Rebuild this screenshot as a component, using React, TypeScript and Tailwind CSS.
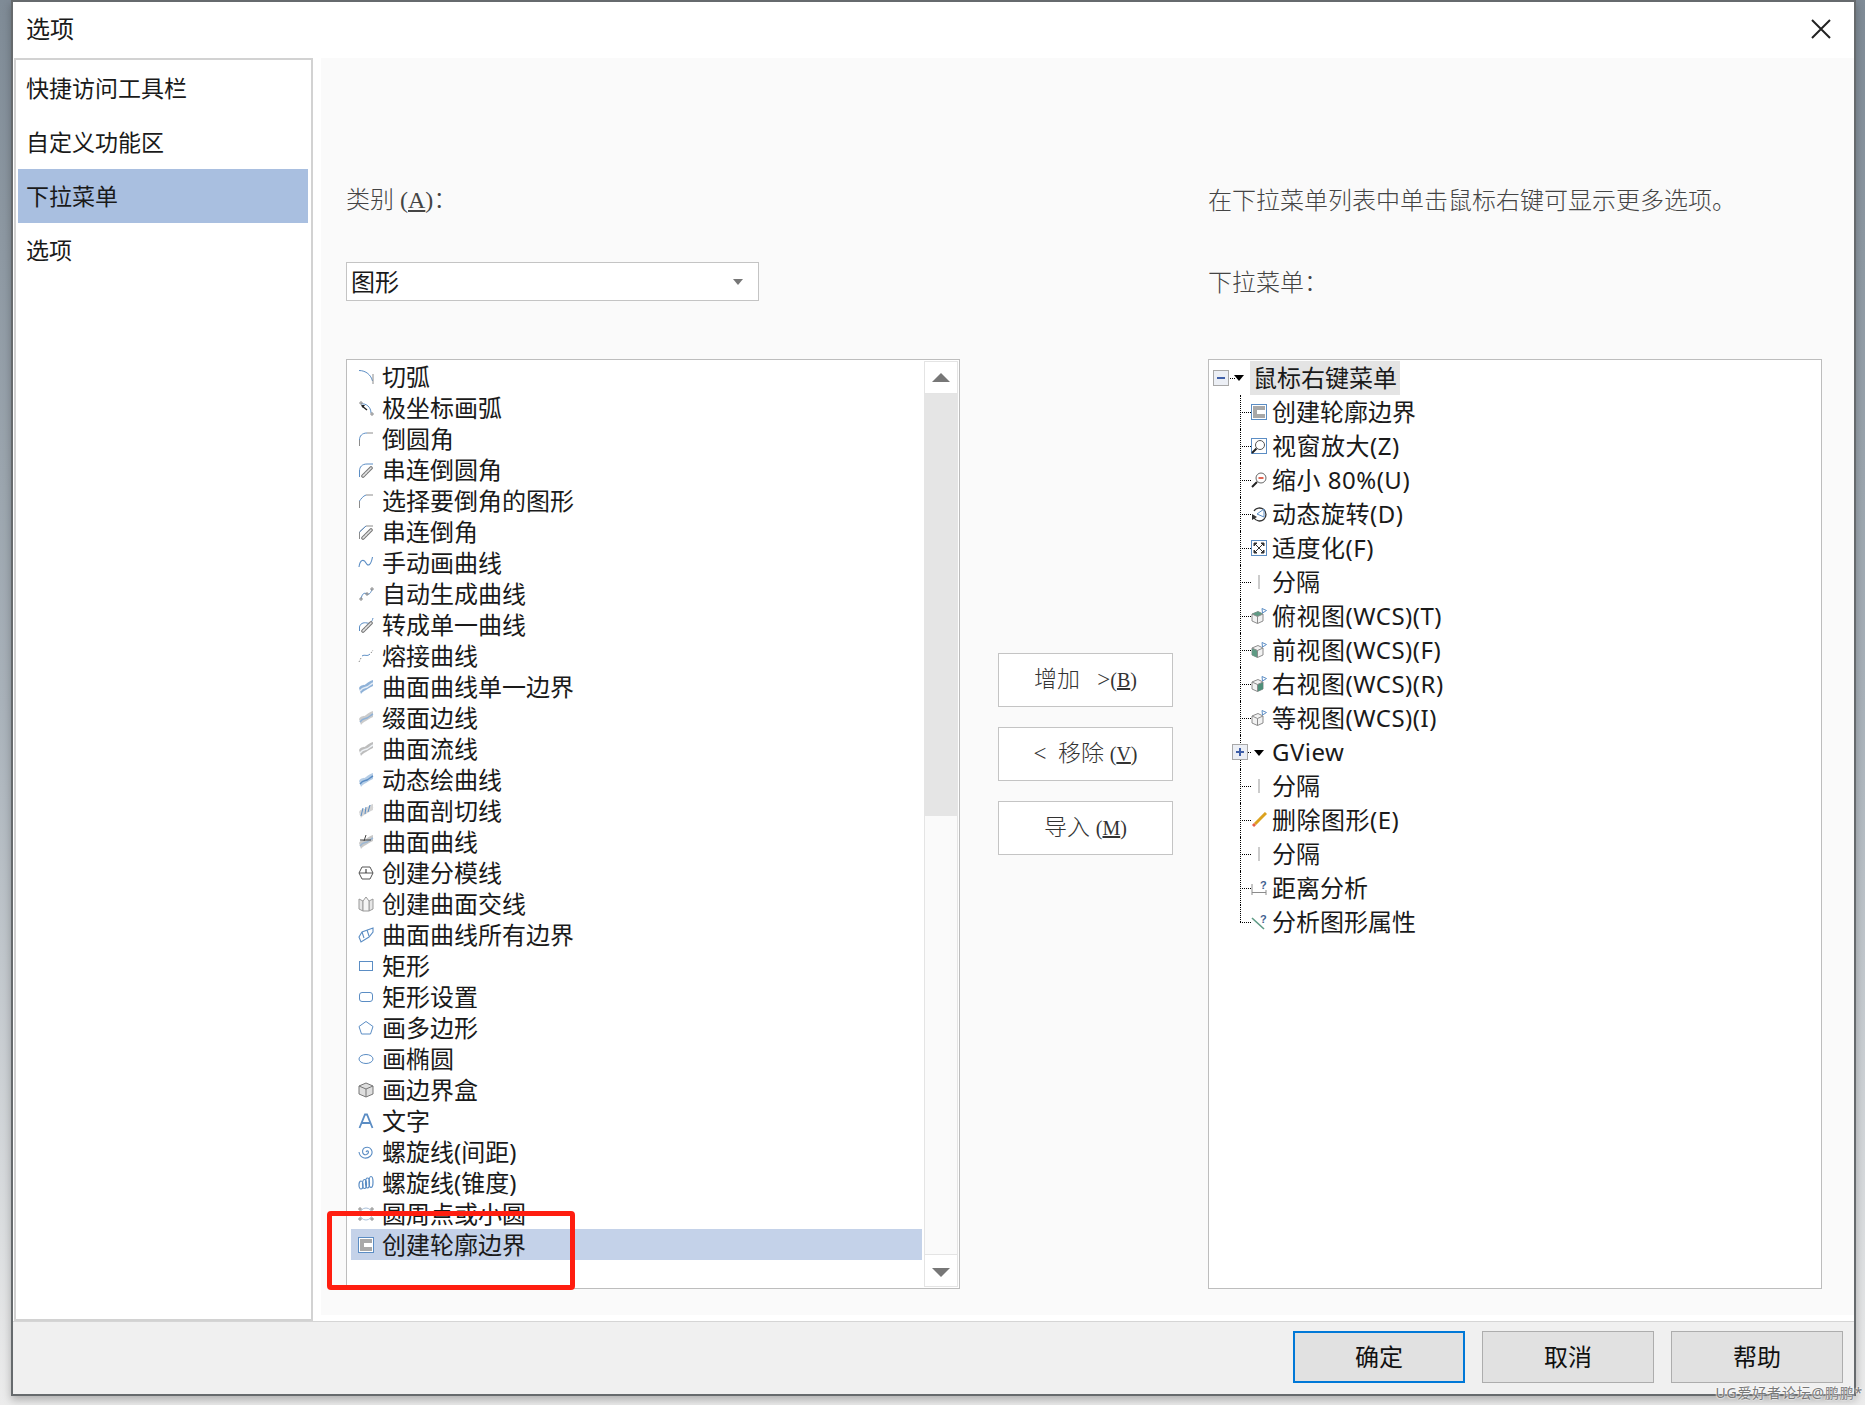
import type { ReactNode } from 'react'

const BLUE = '#5b8dc4'
const GRAY = '#8c8c8c'

function Chain() {
  return (
    <g fill="none" strokeLinecap="round">
      <path d="M5 14 L13 6" stroke="#777" strokeWidth="3.6" />
      <path d="M5 14 L13 6" stroke="#e4e4e4" strokeWidth="1.6" strokeDasharray="2 1.4" />
    </g>
  )
}

function Surface({ fill, line }: { fill: string; line: string }) {
  return (
    <g>
      <path d="M1 9 C3 5 6 7 8 5 C10 3 12 2 15 1 L15 7 C12 8 10 10 8 11 C6 12 4 13 3 15 Z" fill={fill} />
      <path d="M2 12 C5 8 7 9 9 8 C11 7 13 5 15 4" fill="none" stroke={line} strokeWidth="1.4" />
    </g>
  )
}

function Cross({ x, y }: { x: number; y: number }) {
  return <path d={`M${x - 2} ${y}h4M${x} ${y - 2}v4`} stroke={GRAY} strokeWidth="1" />
}

function Cube({ face }: { face?: 'top' | 'left' | 'right' }) {
  return (
    <g>
      <path d="M1 6 L7 3.5 L12 6 V13 L6.5 15.5 L1 13 Z" fill="#f2f2f2" stroke={GRAY} strokeWidth="1" />
      {face === 'top' && <path d="M1 6 L7 3.5 L12 6 L6.5 8.5 Z" fill="#5f9a84" />}
      {face === 'left' && <path d="M1 6 L6.5 8.5 V15.5 L1 13 Z" fill="#5f9a84" />}
      {face === 'right' && <path d="M6.5 8.5 L12 6 V13 L6.5 15.5 Z" fill="#4f8f79" />}
      <path d="M1 6 L6.5 8.5 L12 6 M6.5 8.5 V15.5" fill="none" stroke={GRAY} strokeWidth="1" />
      <path d="M11 0.5 L15.5 2.5 L11.5 5 Z" fill="#fff" stroke={BLUE} strokeWidth="1" />
    </g>
  )
}

function Separator() {
  return <path d="M8 1V15" stroke="#999" strokeWidth="1" />
}

function Outline() {
  return (
    <g>
      <rect x="0.5" y="0.5" width="15" height="15" fill="#fff" stroke={BLUE} />
      <path d="M2 2H14V6H6V10H14V14H2Z" fill="#a8a8a8" />
    </g>
  )
}

const icons: Record<string, ReactNode> = {
  tangentArc: (
    <g fill="none">
      <path d="M1 1.5 C8 1.5 13 6 14.5 12" stroke={BLUE} />
      <path d="M15 5V15" stroke={GRAY} />
    </g>
  ),
  polarArc: (
    <g fill="none">
      <path d="M3 4 C8 3 13 7 13 13" stroke={BLUE} />
      <Cross x={3} y={3} />
      <Cross x={14} y={14} />
      <path d="M4 6 L9 10" stroke="#222" strokeWidth="1.5" />
      <path d="M3 5 L7 5 L5 8Z" fill="#222" />
    </g>
  ),
  fillet: (
    <g fill="none">
      <path d="M1.5 15V9" stroke={GRAY} />
      <path d="M1.5 9 C1.5 5 4 2 9 2" stroke={BLUE} />
      <path d="M9 2H15" stroke={GRAY} />
    </g>
  ),
  chainFillet: (
    <g fill="none">
      <path d="M1.5 15V9 C1.5 5 4 2 9 2H15" stroke={BLUE} />
      <Chain />
    </g>
  ),
  chamfer: (
    <g fill="none">
      <path d="M1.5 15V8" stroke={GRAY} />
      <path d="M1.5 8 C3 6 5 3 8 2" stroke={BLUE} />
      <path d="M8 2H15" stroke={GRAY} />
    </g>
  ),
  chainChamfer: (
    <g fill="none">
      <path d="M1.5 15V8 L8 2H15" stroke={GRAY} />
      <path d="M1.5 8 L8 2" stroke={BLUE} />
      <Chain />
    </g>
  ),
  freehand: <path d="M1 12 C2 4 6 4 8 8 C10 12 13 10 14.5 2" fill="none" stroke={BLUE} strokeWidth="1.1" />,
  autoCurve: (
    <g fill="none">
      <path d="M3 13 C4 8 6 6 9 8 C11 9 13 7 14 3" stroke={BLUE} />
      <Cross x={3} y={13} />
      <Cross x={9} y={8} />
      <Cross x={14} y={3} />
    </g>
  ),
  singleCurve: (
    <g fill="none">
      <path d="M1.5 14 V10 C2 7 5 5 9 6 C12 7 14 5 15 1" stroke={BLUE} />
      <Chain />
    </g>
  ),
  blend: (
    <g fill="none">
      <path d="M4 8 C7 6 9 9 12 6" stroke={BLUE} />
      <path d="M1 14 L3 10 M13 5 L15 2" stroke={GRAY} strokeDasharray="1.5 1.5" />
    </g>
  ),
  surfEdge: <Surface fill="#8fb2d8" line="#e3ecf6" />,
  patchEdge: <Surface fill="#cbcbcb" line="#8fb2d8" />,
  flowLine: <Surface fill="#bdbdbd" line="#eef2f6" />,
  dynCurve: <Surface fill="#b5cde6" line="#5b8dc4" />,
  sliceCurve: (
    <g>
      <Surface fill="#d4d4d4" line="#d4d4d4" />
      <path d="M5 5 L3 13 M8 4 L7 11 M12 2 L10 9" stroke={BLUE} fill="none" />
    </g>
  ),
  surfCurve: (
    <g>
      <Surface fill="#c8c8c8" line="#9db8d4" />
      <path d="M2 6 H13 M8 1 L6 7" stroke="#444" fill="none" />
    </g>
  ),
  parting: (
    <g fill="none" stroke="#555">
      <path d="M1 8 L4 2 H12 L15 8 L12 14 H4 Z" />
      <path d="M1 8 H15" />
      <path d="M8 8V4" stroke="#222" />
    </g>
  ),
  intersect: (
    <g fill="#e6e6e6" stroke="#999">
      <path d="M1 3 L5 5 V15 L1 13 Z" />
      <path d="M15 3 L11 5 V15 L15 13 Z" />
      <path d="M5 5 L8 1 L11 5 V15 H5 Z" fill="#f4f4f4" />
    </g>
  ),
  allEdges: (
    <g fill="none" stroke={BLUE} strokeWidth="1.1">
      <path d="M1 10 L4 5 L15 1 V5 L11 10 L3 15 Z" />
      <path d="M4 5 L6 11 M9 3 L11 9" />
    </g>
  ),
  rect: <rect x="1.5" y="3.5" width="13" height="9" fill="none" stroke={BLUE} />,
  rectSet: <rect x="1.5" y="3.5" width="13" height="9" rx="2.5" fill="none" stroke={BLUE} />,
  polygon: <path d="M8 1.5 L15 6.5 L12.5 14 H3.5 L1 6.5 Z" fill="none" stroke={BLUE} />,
  ellipse: <ellipse cx="8" cy="8" rx="7" ry="4.5" fill="none" stroke={BLUE} />,
  box: (
    <g fill="#dedede" stroke="#777">
      <path d="M8 1 L15 4 V12 L8 15 L1 12 V4 Z" />
      <path d="M1 4 L8 7 L15 4 M8 7 V15" fill="none" />
    </g>
  ),
  text: <path d="M1.5 15 L7 1.5 H9 L14.5 15 M4 10 H12" fill="none" stroke={BLUE} strokeWidth="1.8" />,
  spiral: (
    <path
      d="M8 8 C10 5 12 9 8.5 10.5 C4 12 3 5 7.5 3.5 C13 2 16 8 12.5 12 C8 16 2 14 1 8"
      fill="none"
      stroke={BLUE}
      strokeWidth="1.1"
    />
  ),
  taperSpiral: (
    <g fill="none" stroke={BLUE} strokeWidth="1.2">
      <ellipse cx="3" cy="10" rx="2" ry="4" />
      <ellipse cx="6.5" cy="9" rx="2" ry="4.5" />
      <ellipse cx="9.5" cy="8" rx="2" ry="5" />
      <ellipse cx="13" cy="7" rx="2" ry="5.5" />
    </g>
  ),
  circlePoints: (
    <g fill="none">
      <circle cx="8" cy="8" r="6" stroke="#a9c0da" />
      <Cross x={2} y={3} />
      <Cross x={14} y={3} />
      <Cross x={2} y={13} />
      <Cross x={14} y={13} />
    </g>
  ),
  outline: <Outline />,
  zoomWin: (
    <g fill="none">
      <rect x="0.5" y="0.5" width="15" height="15" stroke={BLUE} />
      <circle cx="9" cy="7" r="4.5" stroke="#555" />
      <path d="M5.5 10.5 L1 15" stroke="#222" strokeWidth="2" />
    </g>
  ),
  zoomOut: (
    <g fill="none">
      <circle cx="10" cy="6" r="5" stroke="#666" />
      <path d="M7.5 6H12.5" stroke="#d9402b" strokeWidth="1.6" />
      <path d="M6 10 L1 15" stroke="#222" strokeWidth="2" />
    </g>
  ),
  rotate: (
    <g fill="none">
      <path d="M3 5 A6.5 6.5 0 1 1 3 12" stroke="#333" strokeWidth="1.3" />
      <path d="M1 8 L6 11 L1 14Z" fill="#333" />
      <path d="M13 3 L6 8 L13 11 Z" stroke={BLUE} />
    </g>
  ),
  fit: (
    <g fill="none">
      <rect x="0.5" y="0.5" width="15" height="15" stroke={BLUE} />
      <path d="M3 3 L13 13 M13 3 L3 13" stroke="#333" />
      <path d="M3 3h3L3 6Z M13 3h-3L13 6Z M3 13h3L3 10Z M13 13h-3L13 10Z" fill="#333" stroke="#333" />
    </g>
  ),
  sep: <Separator />,
  top: <Cube face="top" />,
  front: <Cube face="left" />,
  right: <Cube face="right" />,
  iso: <Cube />,
  erase: (
    <g>
      <path d="M15 1 L4 12" stroke="#dca21e" strokeWidth="3" />
      <path d="M4 12 L2 14" stroke="#e8604a" strokeWidth="3" />
    </g>
  ),
  distance: (
    <g fill="none">
      <path d="M1 4V15 M15 10V15 M1 12.5H15" stroke={GRAY} />
      <text x="9" y="8.5" fontSize="11" fontWeight="700" fill="#3f5f90" fontFamily="Liberation Sans, sans-serif">
        ?
      </text>
    </g>
  ),
  analyze: (
    <g fill="none">
      <path d="M1 4 L13 15" stroke="#5d9a85" strokeWidth="1.6" />
      <text x="9" y="8.5" fontSize="11" fontWeight="700" fill="#3f5f90" fontFamily="Liberation Sans, sans-serif">
        ?
      </text>
    </g>
  ),
}

function Icon({ name }: { name: string }) {
  return (
    <svg width="16" height="16" viewBox="0 0 16 16" className="shrink-0">
      {icons[name]}
    </svg>
  )
}

const sideItems = ['快捷访问工具栏', '自定义功能区', '下拉菜单', '选项']

const leftItems: [string, string][] = [
  ['tangentArc', '切弧'],
  ['polarArc', '极坐标画弧'],
  ['fillet', '倒圆角'],
  ['chainFillet', '串连倒圆角'],
  ['chamfer', '选择要倒角的图形'],
  ['chainChamfer', '串连倒角'],
  ['freehand', '手动画曲线'],
  ['autoCurve', '自动生成曲线'],
  ['singleCurve', '转成单一曲线'],
  ['blend', '熔接曲线'],
  ['surfEdge', '曲面曲线单一边界'],
  ['patchEdge', '缀面边线'],
  ['flowLine', '曲面流线'],
  ['dynCurve', '动态绘曲线'],
  ['sliceCurve', '曲面剖切线'],
  ['surfCurve', '曲面曲线'],
  ['parting', '创建分模线'],
  ['intersect', '创建曲面交线'],
  ['allEdges', '曲面曲线所有边界'],
  ['rect', '矩形'],
  ['rectSet', '矩形设置'],
  ['polygon', '画多边形'],
  ['ellipse', '画椭圆'],
  ['box', '画边界盒'],
  ['text', '文字'],
  ['spiral', '螺旋线(间距)'],
  ['taperSpiral', '螺旋线(锥度)'],
  ['circlePoints', '圆周点或小圆'],
  ['outline', '创建轮廓边界'],
]

const treeItems: [string, string][] = [
  ['outline', '创建轮廓边界'],
  ['zoomWin', '视窗放大(Z)'],
  ['zoomOut', '缩小 80%(U)'],
  ['rotate', '动态旋转(D)'],
  ['fit', '适度化(F)'],
  ['sep', '分隔'],
  ['top', '俯视图(WCS)(T)'],
  ['front', '前视图(WCS)(F)'],
  ['right', '右视图(WCS)(R)'],
  ['iso', '等视图(WCS)(I)'],
  ['gview', 'GView'],
  ['sep', '分隔'],
  ['erase', '删除图形(E)'],
  ['sep', '分隔'],
  ['distance', '距离分析'],
  ['analyze', '分析图形属性'],
]

function Caret({ className }: { className: string }) {
  return (
    <svg width="10" height="6" viewBox="0 0 10 6" className={className}>
      <path d="M0 0H10L5 6Z" fill="currentColor" />
    </svg>
  )
}

function Expander({ open, className }: { open: boolean; className: string }) {
  return (
    <span className={`flex h-[16px] w-[16px] items-center justify-center border border-[#a8a8a8] bg-[#eceff5] ${className}`}>
      <svg width="10" height="10" viewBox="0 0 10 10">
        <path d={open ? 'M1 5H9' : 'M1 5H9M5 1V9'} stroke="#3f5fa8" strokeWidth="2" />
      </svg>
    </span>
  )
}

function TreeRow({ icon, label, last }: { icon: string; label: string; last: boolean }) {
  const isGroup = icon === 'gview'
  const hasLatin = /[A-Za-z]/.test(label)
  return (
    <div className="relative flex h-[34px] items-center">
      <span
        className={`absolute left-[31px] top-0 border-l border-dotted border-black ${last ? 'h-[17px]' : 'h-[34px]'}`}
      />
      <span className="absolute left-[31px] top-[17px] w-[11px] border-t border-dotted border-black" />
      {isGroup ? (
        <>
          <Expander open={false} className="absolute left-[23px] top-[9px]" />
          <Caret className="absolute left-[45px] top-[15px] text-black" />
        </>
      ) : (
        <span className="absolute left-[42px] top-[9px]">
          <Icon name={icon} />
        </span>
      )}
      <span className={`pl-[63px] ${hasLatin ? 'tracking-[0.5px]' : ''}`}>{label}</span>
    </div>
  )
}

function DialogButton({ children, primary }: { children: ReactNode; primary?: boolean }) {
  return (
    <button
      className={`h-[52px] w-[172px] bg-[#e1e1e1] text-[24px] text-[#111] ${
        primary ? 'border-2 border-[#0078d7]' : 'border border-[#adadad]'
      }`}
    >
      {children}
    </button>
  )
}

function SideButton({ children }: { children: ReactNode }) {
  return (
    <button className="flex h-[54px] w-[175px] items-center justify-center border border-[#c4c4c4] bg-white text-[23px] font-light text-[#333]">
      {children}
    </button>
  )
}

function Mnemonic({ letter }: { letter: string }) {
  return (
    <span className="text-[20px]">
      (<span className="underline">{letter}</span>)
    </span>
  )
}

export default function App() {
  return (
    <div className="relative h-[1405px] w-[1865px] overflow-hidden bg-linear-to-b from-[#7f8b96] via-[#a9b2ba] to-[#ececec] pl-[11px] pr-[9px] [font-family:'Noto_Sans','Noto_Sans_CJK_SC',sans-serif]">
      <div className="flex h-[1396px] flex-col border-2 border-[#666a6d] bg-white text-[#1a1a1a] shadow-[0_4px_8px_rgba(0,0,0,0.25)]">
        <div className="flex h-[56px] shrink-0 items-center justify-between pb-[2px] pl-[13px] pr-[23px]">
          <span className="text-[24px]">选项</span>
          <svg width="20" height="20" viewBox="0 0 20 20">
            <path d="M1 1L19 19M19 1L1 19" stroke="#222" strokeWidth="2" />
          </svg>
        </div>

        <div className="flex h-[1263px] shrink-0">
          <div className="ml-px flex h-full w-[299px] shrink-0 flex-col border-2 border-[#d2d2d2] pl-[2px] pr-[3px] pt-px text-[23px]">
            {sideItems.map((item, i) => (
              <div
                key={item}
                className={`flex h-[54px] items-center pl-[8px] ${i === 2 ? 'bg-[#a9bfe0]' : ''}`}
              >
                {item}
              </div>
            ))}
          </div>

          <div className="ml-[8px] h-[1257px] flex-1 bg-[#fafafa] pl-[25px] pt-[124px] text-[24px] text-[#444]">
            <div className="grid h-[28px] grid-cols-[614px_248px_614px] items-center font-light">
              <span className="[font-family:'Liberation_Serif','Noto_Sans_CJK_SC',serif]">
                类别 (<span className="underline">A</span>)：
              </span>
              <span />
              <span className="whitespace-nowrap">在下拉菜单列表中单击鼠标右键可显示更多选项。</span>
            </div>

            <div className="mt-[52px] grid h-[39px] grid-cols-[614px_248px_614px] items-center">
              <div className="flex h-[39px] w-[413px] items-center justify-between border border-[#c4c4c4] bg-white pl-[4px] pr-[15px] text-[#1a1a1a]">
                图形
                <Caret className="text-[#777]" />
              </div>
              <span />
              <span className="pt-[2px] font-light [font-family:'Liberation_Serif','Noto_Sans_CJK_SC',serif]">
                下拉菜单：
              </span>
            </div>

            <div className="mt-[58px] grid h-[930px] grid-cols-[614px_248px_614px] text-[#1a1a1a]">
              <div className="relative flex border border-[#bdbdbd] bg-white">
                <div className="flex-1 pl-[4px] pt-px">
                  {leftItems.map(([icon, label], i) => (
                    <div
                      key={label}
                      className={`flex h-[31px] w-[571px] items-center gap-[8px] pl-[7px] leading-none ${
                        i === leftItems.length - 1 ? 'bg-[#c4d2e9]' : ''
                      }`}
                    >
                      <Icon name={icon} />
                      {label}
                    </div>
                  ))}
                </div>

                <div className="my-px mr-px flex w-[34px] flex-col bg-[#fafafa]">
                  <div className="flex h-[33px] shrink-0 items-center justify-center border border-[#e4e4e4] bg-white">
                    <svg width="18" height="9" viewBox="0 0 18 9">
                      <path d="M0 9L9 0L18 9Z" fill="#777" />
                    </svg>
                  </div>
                  <div className="h-[422px] shrink-0 bg-[#e5e5e5]" />
                  <div className="flex-1 border-x border-[#e4e4e4]" />
                  <div className="flex h-[33px] shrink-0 items-center justify-center border border-[#e4e4e4] bg-white pt-[3px]">
                    <svg width="18" height="9" viewBox="0 0 18 9">
                      <path d="M0 0L9 9L18 0Z" fill="#777" />
                    </svg>
                  </div>
                </div>

                <div className="absolute left-[-20px] top-[851px] h-[79px] w-[248px] rounded-[4px] border-[5px] border-[#ff1e10]" />
              </div>

              <div className="flex flex-col gap-[20px] pl-[38px] pt-[294px] [font-family:'Liberation_Serif','Noto_Sans_CJK_SC',serif]">
                <SideButton>
                  增加&nbsp;&nbsp;&nbsp;&gt;
                  <Mnemonic letter="B" />
                </SideButton>
                <SideButton>
                  &lt;&nbsp;&nbsp;移除&nbsp;
                  <Mnemonic letter="V" />
                </SideButton>
                <SideButton>
                  导入&nbsp;
                  <Mnemonic letter="M" />
                </SideButton>
              </div>

              <div className="border border-[#bdbdbd] bg-white pt-px leading-none">
                <div className="relative flex h-[34px] items-center">
                  <Expander open className="absolute left-[4px] top-[9px]" />
                  <span className="absolute left-[21px] top-[17px] w-[5px] border-t border-dotted border-black" />
                  <Caret className="absolute left-[25px] top-[14px] text-black" />
                  <span className="ml-[41px] flex h-[34px] items-center bg-[#e4e4e4] px-[3px]">鼠标右键菜单</span>
                </div>
                {treeItems.map(([icon, label], i) => (
                  <TreeRow key={label + i} icon={icon} label={label} last={i === treeItems.length - 1} />
                ))}
              </div>
            </div>
          </div>
        </div>

        <div className="flex flex-1 justify-end gap-[17px] border-t border-[#d5d5d5] bg-[#f0f0f0] pr-[11px] pt-[9px]">
          <DialogButton primary>确定</DialogButton>
          <DialogButton>取消</DialogButton>
          <DialogButton>帮助</DialogButton>
        </div>
      </div>

      <span className="absolute bottom-[5px] right-[2px] text-[14px] leading-none tracking-[0.8px] text-[#777] [text-shadow:0_0_2px_#fff,0_0_2px_#fff]">
        UG爱好者论坛@鹏鹏*
      </span>
    </div>
  )
}
